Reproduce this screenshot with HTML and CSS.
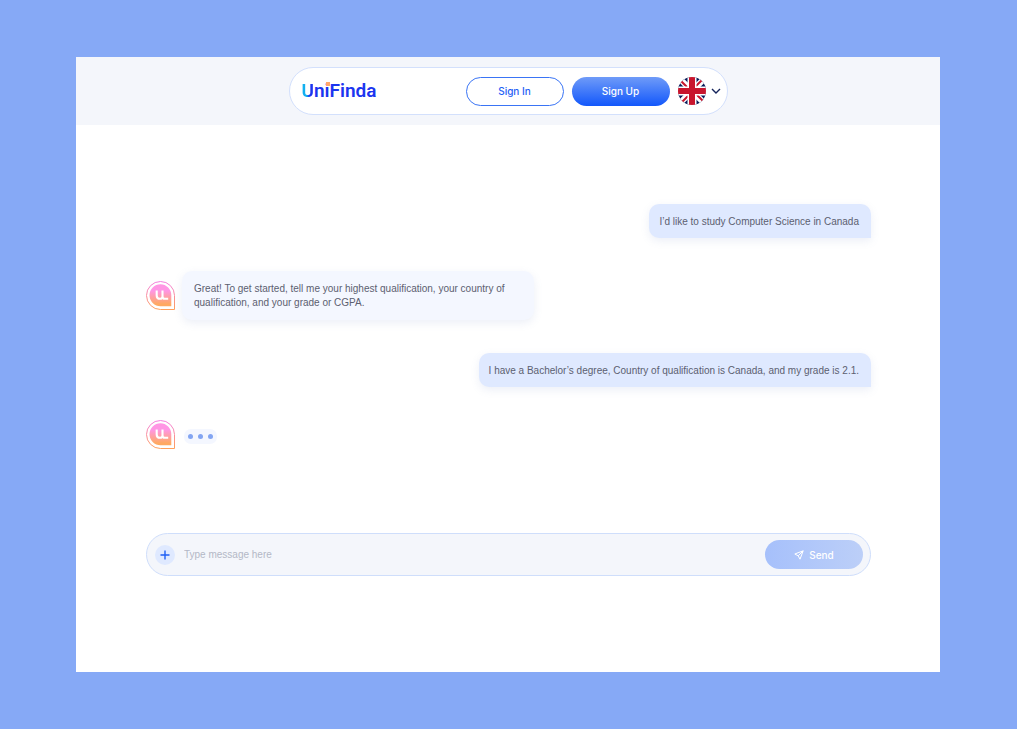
FILE: index.html
```html
<!DOCTYPE html>
<html lang="en">
  <head>
    <meta charset="utf-8" />
    <meta name="viewport" content="width=device-width, initial-scale=1" />
    <title>UniFinda</title>
    <link rel="stylesheet" href="styles.css" />
  </head>
  <body>
    <!-- Shared avatar, used next to every bot message -->
    <svg class="sprite" aria-hidden="true">
      <defs>
        <linearGradient id="avatar-gradient" x1="0" y1="0" x2="0" y2="1">
          <stop offset="0.3" stop-color="#ff96e4" />
          <stop offset="0.9" stop-color="#ffa962" />
        </linearGradient>
        <linearGradient id="ring-gradient" x1="0" y1="0" x2="0" y2="1">
          <stop offset="0" stop-color="#f27de0" />
          <stop offset="1" stop-color="#ffa05c" />
        </linearGradient>
        <symbol id="avatar" viewBox="0 0 29 29">
          <path d="M14.5.5a14 14 0 0 0 0 28h14v-14a14 14 0 0 0-14-14z" fill="#fff" stroke="url(#ring-gradient)" />
          <path d="M14.5 3.3a11 11 0 0 0 0 22h10.8v-11a11 11 0 0 0-10.8-11z" fill="url(#avatar-gradient)" />
          <path d="M10.7 9.6v4.8q0 3.4 3.2 3.4 2.6 0 2.6-2.4V9.6m0 5.6q0 2.6 2.4 2.6h3.3" fill="none" stroke="#fff" stroke-width="2.1" />
        </symbol>
      </defs>
    </svg>

    <div class="window">
      <header class="header">
        <nav class="navbar">
          <a class="logo" href="#"><span class="logo-u">U</span>n<span class="logo-i">i</span>Finda</a>
          <button class="btn btn-outline" type="button">Sign In</button>
          <button class="btn btn-primary" type="button">Sign Up</button>
          <button class="language" type="button" aria-label="Language">
            <svg class="flag" viewBox="0 0 28 28">
              <clipPath id="round"><circle cx="14" cy="14" r="14" /></clipPath>
              <g clip-path="url(#round)">
                <path d="M0 0h28v28H0z" fill="#0a1f5c" />
                <path d="M0 0l28 28M28 0L0 28" stroke="#fff" stroke-width="6" />
                <path d="M0 1l14 14M28 27L14 13M27 0L13 14M1 28l14-14" stroke="#c8152d" stroke-width="2" />
                <path d="M14 0v28M0 14h28" stroke="#fff" stroke-width="9" />
                <path d="M14 0v28M0 14h28" stroke="#c8152d" stroke-width="6" />
              </g>
            </svg>
            <svg class="chevron" viewBox="0 0 10 10">
              <path d="M1 3l4 4 4-4" fill="none" stroke="#14235a" stroke-width="1.4" />
            </svg>
          </button>
        </nav>
      </header>

      <main class="chat">
        <div class="messages">
          <p class="bubble bubble-user">I’d like to study Computer Science in Canada</p>

          <div class="bot-row">
            <svg class="avatar"><use href="#avatar" /></svg>
            <p class="bubble bubble-bot">
              Great! To get started, tell me your highest qualification, your country of qualification, and your grade or CGPA.
            </p>
          </div>

          <p class="bubble bubble-user">I have a Bachelor’s degree, Country of qualification is Canada, and my grade is 2.1.</p>

          <div class="bot-row">
            <svg class="avatar"><use href="#avatar" /></svg>
            <div class="typing">
              <span class="dot"></span>
              <span class="dot"></span>
              <span class="dot"></span>
            </div>
          </div>
        </div>

        <form class="composer">
          <button class="attach" type="button" aria-label="Add attachment">
            <svg viewBox="0 0 10 10">
              <path d="M5 .5v9M.5 5h9" stroke="#1f5ef5" stroke-width="1.4" />
            </svg>
          </button>
          <input class="message-input" type="text" aria-label="Message" placeholder="Type message here" />
          <button class="btn btn-send" type="button">
            <svg viewBox="0 0 10 10">
              <path d="M9.2.8L.8 4l3.4 1.8L6 9.2zM9.2.8L4.2 5.8" fill="none" stroke="#fff" stroke-linejoin="round" />
            </svg>
            Send
          </button>
        </form>
      </main>
    </div>
  </body>
</html>
```

FILE: styles.css
```css
* {
  box-sizing: border-box;
}

html {
  background: #fff;
}

body {
  display: flex;
  min-height: 100vh;
  margin: 0;
  padding: 57px 77px 57px 76px;
  border-bottom: 1px solid #fff;
  background: #86a9f6;
  color: #5c6070;
  font: 10px/14px "Liberation Sans", Arial, sans-serif;
}

button,
input {
  padding: 0;
  border: 0;
  background: none;
  font: inherit;
}

button {
  cursor: pointer;
}

.sprite {
  position: absolute;
  width: 0;
  height: 0;
}

.window {
  flex: 1;
  background: #fff;
}

/* Header */

.header {
  display: flex;
  justify-content: center;
  padding: 10px;
  background: #f4f6fb;
}

.navbar {
  display: flex;
  align-items: center;
  gap: 8px;
  width: 439px;
  height: 48px;
  padding: 0 6px 0 12px;
  border: 1px solid #d3e0fc;
  border-radius: 24px;
  background: #fff;
}

.logo {
  margin-right: auto;
  color: #1b35f0;
  font: 600 19px/20px Roboto, sans-serif;
  text-decoration: none;
}

.logo-u {
  background: linear-gradient(90deg, #12b0f0 40%, #1b35f0 60%);
  background-clip: text;
  color: transparent;
}

.logo-i {
  position: relative;
}

/* Orange tittle over the first i */
.logo-i::before {
  content: "";
  position: absolute;
  top: 3px;
  left: 1px;
  width: 4px;
  height: 4px;
  background: #ffa76b;
}

.btn {
  width: 98px;
  height: 29px;
  border-radius: 15px;
  font: 500 10px/14px Inter, sans-serif;
}

.btn-outline {
  border: 1px solid #3a74f5;
  color: #1f5ef5;
}

.btn-primary {
  background: linear-gradient(#6f9bf8, #1257fb);
  color: #fff;
}

.language {
  display: flex;
  align-items: center;
  gap: 5px;
}

.flag {
  width: 28px;
  height: 28px;
}

.chevron {
  width: 10px;
  height: 10px;
}

/* Chat */

.chat {
  padding: 79px 69px 0 70px;
}

.messages {
  display: flex;
  flex-direction: column;
  gap: 33px;
}

.bubble {
  margin: 0;
  box-shadow: 0 3px 8px rgba(120, 140, 200, 0.14);
}

.bubble-user {
  align-self: flex-end;
  padding: 11px 12px 9px 10px;
  border-radius: 10px 10px 0 10px;
  background: #dfe9ff;
}

.bubble-bot {
  max-width: 352px;
  padding: 11px 12px 10px;
  border-radius: 10px;
  background: #f4f7ff;
}

.bot-row {
  display: flex;
  align-items: center;
  gap: 7px;
}

.avatar {
  flex: none;
  width: 29px;
  height: 29px;
}

.typing {
  display: flex;
  gap: 5px;
  margin: 4px 0 0 2px;
  padding: 5px 4px;
  border-radius: 7px;
  background: #f4f7ff;
}

.dot {
  width: 5px;
  height: 5px;
  border-radius: 50%;
  background: #83a5f2;
}

/* Composer */

.composer {
  display: flex;
  align-items: center;
  gap: 9px;
  height: 43px;
  margin-top: 84px;
  padding: 0 7px 0 8px;
  border: 1px solid #cfdefb;
  border-radius: 22px;
  background: #f4f6fb;
}

.attach {
  display: flex;
  align-items: center;
  justify-content: center;
  width: 20px;
  height: 20px;
  border-radius: 50%;
  background: #dfe9ff;
}

.attach svg {
  width: 10px;
  height: 10px;
}

.message-input {
  flex: 1;
  min-width: 0;
  color: #5c6070;
  outline: 0;
}

.message-input::placeholder {
  color: #b3b8c6;
  opacity: 1;
}

.btn-send {
  display: flex;
  align-items: center;
  justify-content: center;
  gap: 5px;
  background: linear-gradient(90deg, #a6c0fb, #bccff8);
  color: #fff;
}

.btn-send svg {
  width: 10px;
  height: 10px;
}
```
